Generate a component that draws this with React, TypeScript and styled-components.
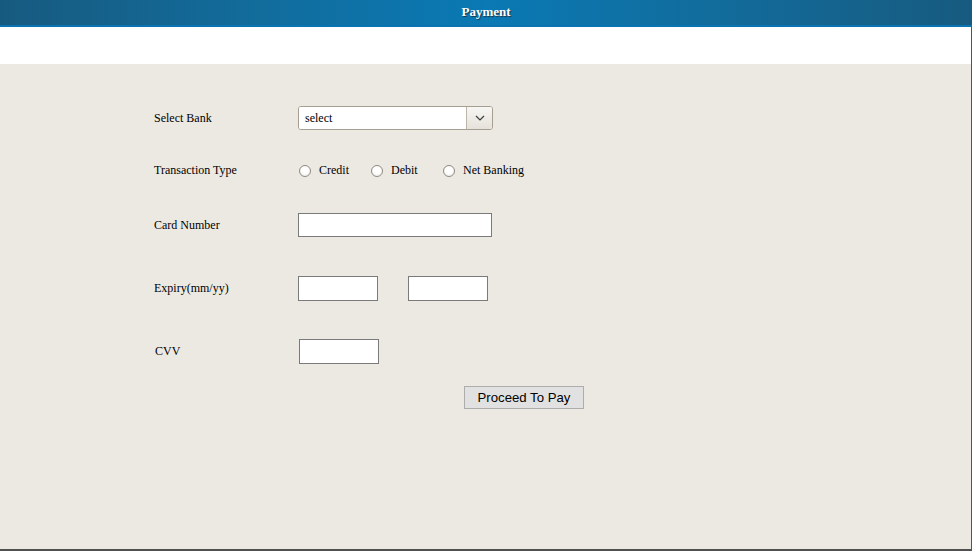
import React from 'react';
import styled, { createGlobalStyle } from 'styled-components';

const GlobalStyle = createGlobalStyle`
  html, body {
    margin: 0;
    padding: 0;
    background: #ffffff;
  }
  body {
    font-family: "Liberation Serif", "Times New Roman", serif;
    font-size: 12px;
    color: #000;
  }
`;

const Page = styled.div`
  width: 972px;
  height: 551px;
  display: flex;
  flex-direction: column;
  box-sizing: border-box;
`;

const Header = styled.header`
  height: 25px;
  border-bottom: 2px solid #0a74b2;
  background: linear-gradient(
    to right,
    #175a7f 0%,
    #126b9a 25%,
    #0a79b4 50%,
    #126b9a 75%,
    #175a7f 100%
  );
  display: flex;
  align-items: center;
  justify-content: center;

  h1 {
    margin: 0 0 1px;
    font-family: "Liberation Serif", "Times New Roman", serif;
    font-size: 13px;
    font-weight: bold;
    color: #ffffff;
    text-shadow: 1px 1px 1px #1f3446;
  }
`;

const Body = styled.div`
  flex: 1;
  display: flex;
  flex-direction: column;
  border-right: 1px solid #1466a0;
`;

const Band = styled.div`
  height: 37px;
  background: #ffffff;
`;

const FormArea = styled.div`
  flex: 1;
  background: #ece9e3;
  border-bottom: 2px solid #505050;
  padding: 42px 0 0 154px;
`;

const Row = styled.div<{ $height: number; $gap: number; $shift?: number }>`
  display: flex;
  align-items: center;
  height: ${p => p.$height}px;
  margin-bottom: ${p => p.$gap}px;
  padding-left: ${p => p.$shift || 0}px;
`;

const Label = styled.label`
  width: 144px;
  flex-shrink: 0;
`;

const SelectBox = styled.div`
  width: 195px;
  height: 24px;
  box-sizing: border-box;
  display: flex;
  border: 1px solid #a69e90;
  border-radius: 3px;
  overflow: hidden;
  background: #ffffff;

  select {
    flex: 1;
    appearance: none;
    border: none;
    outline: none;
    background: #ffffff;
    font-family: "Liberation Serif", "Times New Roman", serif;
    font-size: 12px;
    padding: 0 0 0 6px;
    color: #000;
  }
`;

const Arrow = styled.span`
  width: 25px;
  border-left: 1px solid #bdb6a9;
  background: linear-gradient(to bottom, #f7f6f3, #e6e2da);
  display: flex;
  align-items: center;
  justify-content: center;
`;

const Options = styled.div`
  display: flex;
  align-items: center;
`;

const Option = styled.label`
  width: 72px;
  display: flex;
  align-items: center;
  gap: 8px;
  white-space: nowrap;

  &:last-child {
    width: auto;
  }
`;

const Radio = styled.input`
  appearance: none;
  flex-shrink: 0;
  margin: 0 0 0 1px;
  width: 12px;
  height: 12px;
  border-radius: 50%;
  border: 1px solid #8f8a82;
  background: radial-gradient(circle at 50% 40%, #ffffff 40%, #ebe8e2 100%);
  box-sizing: border-box;
`;

const TextInput = styled.input<{ $width: number; $height?: number }>`
  width: ${p => p.$width}px;
  height: ${p => p.$height || 25}px;
  box-sizing: border-box;
  border: 1px solid #7a7a7a;
  background: #ffffff;
  margin: 0;
  padding: 0 4px;
  font-family: "Liberation Serif", "Times New Roman", serif;
  font-size: 12px;
`;

const Gap = styled.span<{ $w: number }>`
  width: ${p => p.$w}px;
  flex-shrink: 0;
`;

const PayButton = styled.button`
  margin-left: 310px;
  width: 120px;
  height: 23px;
  box-sizing: border-box;
  border: 1px solid #adadad;
  background: #e1e1e1;
  font-family: "Liberation Sans", Arial, sans-serif;
  font-size: 13.2px;
  color: #000;
  padding: 0;
`;

const Chevron = () => (
  <svg width="10" height="6" viewBox="0 0 10 6">
    <path d="M1 1 L5 5 L9 1" fill="none" stroke="#3c3c3c" strokeWidth="1.2" />
  </svg>
);

export default function App() {
  return (
    <Page>
      <GlobalStyle />
      <Header>
        <h1>Payment</h1>
      </Header>
      <Body>
        <Band />
        <FormArea>
          <Row $height={24} $gap={28}>
            <Label>Select Bank</Label>
            <SelectBox>
              <select defaultValue="select">
                <option value="select">select</option>
              </select>
              <Arrow>
                <Chevron />
              </Arrow>
            </SelectBox>
          </Row>
          <Row $height={25} $gap={30}>
            <Label>Transaction Type</Label>
            <Options>
              <Option>
                <Radio type="radio" name="txn" />
                Credit
              </Option>
              <Option>
                <Radio type="radio" name="txn" />
                Debit
              </Option>
              <Option>
                <Radio type="radio" name="txn" />
                Net Banking
              </Option>
            </Options>
          </Row>
          <Row $height={24} $gap={39}>
            <Label>Card Number</Label>
            <TextInput $width={194} $height={24} />
          </Row>
          <Row $height={25} $gap={38}>
            <Label>Expiry(mm/yy)</Label>
            <TextInput $width={80} />
            <Gap $w={30} />
            <TextInput $width={80} />
          </Row>
          <Row $height={25} $gap={22} $shift={1}>
            <Label>CVV</Label>
            <TextInput $width={80} />
          </Row>
          <Row $height={23} $gap={0}>
            <PayButton>Proceed To Pay</PayButton>
          </Row>
        </FormArea>
      </Body>
    </Page>
  );
}
